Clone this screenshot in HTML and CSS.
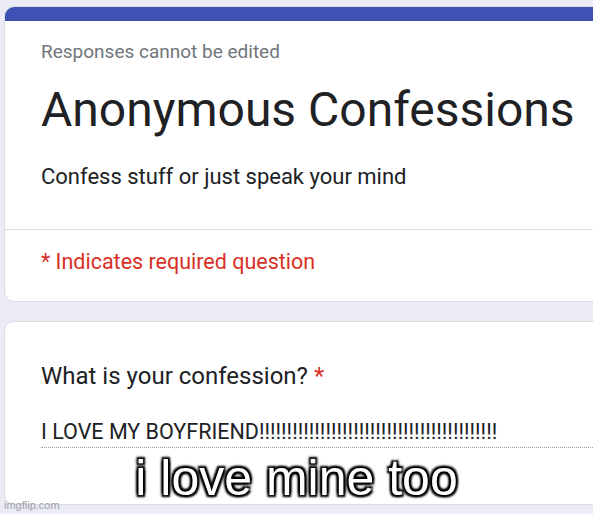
FILE: index.html
```html
<!DOCTYPE html>
<html lang="en">
<head>
    <meta charset="UTF-8">
    <meta name="viewport" content="width=device-width, initial-scale=1.0">
    <title>Anonymous Confessions</title>
    <link rel="stylesheet" href="styles.css">
</head>
<body>

<div class="page">
    <div class="card header-card">
        <div class="top-bar"></div>
        <div class="header">
            <p class="note">Responses cannot be edited</p>
            <h1>Anonymous Confessions</h1>
            <p class="desc">Confess stuff or just speak your mind</p>
        </div>
        <div class="required">* Indicates required question</div>
    </div>

    <div class="card question-card">
        <div class="question">What is your confession? <span class="star">*</span></div>
        <div class="answer">I LOVE MY BOYFRIEND!!!!!!!!!!!!!!!!!!!!!!!!!!!!!!!!!!!!!!!!!!!</div>
    </div>
</div>

<div class="caption">i love mine too</div>
<div class="watermark">imgflip.com</div>

</body>
</html>
```

FILE: styles.css
```css
* {
    margin: 0;
    padding: 0;
    box-sizing: border-box;
}

body {
    background-color: #eaebf5;
    font-family: Roboto, 'Liberation Sans', sans-serif;
    width: 593px;
    height: 514px;
    overflow: hidden;
    position: relative;
}

.page {
    padding: 6px 0 0 4px;
    width: 640px;
}

.card {
    background-color: white;
    border: 1px solid #dadce0;
    border-radius: 10px;
    overflow: hidden;
}

.top-bar {
    height: 15px;
    background-color: #3f51b5;
    margin: -1px -1px 0 -1px;
}

.header {
    padding: 19px 36px 38px 36px;
    border-bottom: 1px solid #dadce0;
}

.note {
    font-size: 19px;
    line-height: 24px;
    color: #70757a;
}

h1 {
    font-size: 48px;
    font-weight: 400;
    line-height: 52px;
    margin-top: 20px;
    color: #202124;
}

.desc {
    font-size: 22px;
    line-height: 28px;
    margin-top: 27px;
    color: #202124;
}

.required {
    padding: 18px 36px 25px 36px;
    font-size: 21.5px;
    line-height: 28px;
    color: #d93025;
}

.question-card {
    margin-top: 19px;
    padding: 39px 0 56px 36px;
}

.question {
    font-size: 24px;
    line-height: 30px;
    color: #202124;
}

.star {
    color: #d93025;
}

.answer {
    margin-top: 29px;
    font-size: 21.5px;
    line-height: 24px;
    padding-bottom: 3px;
    color: #202124;
    white-space: nowrap;
    border-bottom: 1px dotted #9aa0a6;
}

.caption {
    position: absolute;
    left: 0;
    right: 0;
    top: 450px;
    text-align: center;
    font-family: 'Liberation Sans', Arial, sans-serif;
    font-size: 50px;
    line-height: 56px;
    color: white;
    text-shadow: 2px 2px 2px black, -2px -2px 2px black, 2px -2px 2px black, -2px 2px 2px black, 0 0 4px black;
}

.watermark {
    position: absolute;
    left: 4px;
    bottom: 3px;
    font-family: 'Liberation Sans', Arial, sans-serif;
    font-size: 11px;
    color: #a0a0a8;
}
```
